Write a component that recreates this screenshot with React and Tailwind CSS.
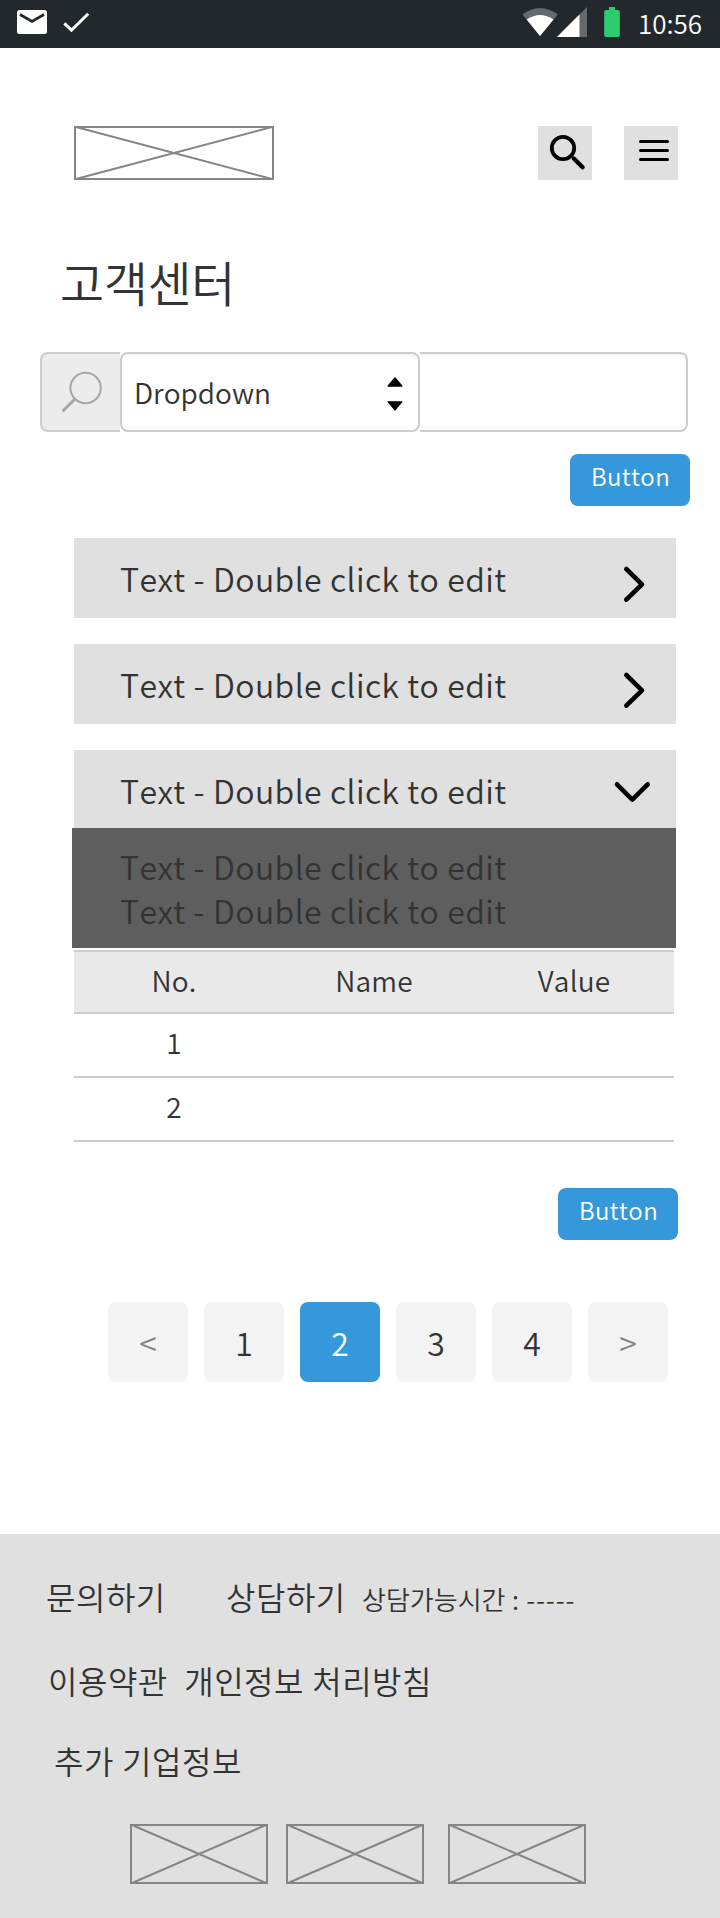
import React from "react";

function Placeholder({ width, height }) {
  return (
    <svg width={width} height={height} viewBox={`0 0 ${width} ${height}`} fill="none" stroke="#858585" className="block shrink-0">
      <rect x="1" y="1" width={width - 2} height={height - 2} strokeWidth="2" />
      <path d={`M2 1 L${width - 2} ${height - 1} M${width - 2} 1 L2 ${height - 1}`} strokeWidth="2" />
    </svg>
  );
}

function StatusBar() {
  return (
    <header className="flex h-12 items-start bg-[#23282c] text-white">
      <svg width="100" height="48" viewBox="0 0 100 48" fill="none" className="block">
        <rect x="17" y="10" width="30" height="24" rx="2.5" fill="#fff" />
        <path d="M20 14.5 L32 21.5 L44 14.5" stroke="#23282c" strokeWidth="2.8" />
        <path d="M64.3 23.3 L71.5 30.2 L88.2 13.7" stroke="#fff" strokeWidth="3" />
      </svg>
      <svg width="120" height="48" viewBox="510 0 120 48" className="ml-[410px] block">
        <path d="M522.5 14.5 Q540 1.5 557.8 14.5 L540 36 Z" fill="#66696c" />
        <path d="M526.7 19.5 Q540 10.5 553.5 19.5 L540 36 Z" fill="#fff" />
        <path d="M557 37 L587 7 V37 Z" fill="#66696c" />
        <path d="M557 37 L579.5 14.5 V37 Z" fill="#fff" />
        <path d="M609 7 h6 v3 h3 a1.8 1.8 0 0 1 1.8 1.8 v23.4 a1.8 1.8 0 0 1 -1.8 1.8 h-12 a1.8 1.8 0 0 1 -1.8 -1.8 v-23.4 a1.8 1.8 0 0 1 1.8 -1.8 h3 z" fill="#2ecc71" />
      </svg>
      <span className="ml-2 h-12 text-[26px] leading-[46px]">10:56</span>
    </header>
  );
}

function AccordionRow({ open }) {
  return (
    <div className={`flex items-center justify-between bg-[#e0e0e0] pl-[46px] ${open ? "h-[78px]" : "h-20"}`}>
      <span className={`text-[32px] leading-[44px] tracking-[0.4px] [word-spacing:0.5px] ${open ? "pt-0.5" : ""}`}>Text - Double click to edit</span>
      <svg width="64" height="78" viewBox="612 0 64 78" fill="none" stroke="#000" strokeWidth="4.6" strokeLinecap="round" strokeLinejoin="round">
        {open ? <path d="M617 34.3 L632.3 49.6 L647.7 34.3" /> : <path d="M626.3 30 L642 45.3 L626.3 60.6" />}
      </svg>
    </div>
  );
}

function Button() {
  return (
    <button className="flex h-[52px] w-[120px] items-center justify-center rounded-lg bg-[#3498db] pb-[9px] pl-[1px] text-2xl leading-none tracking-[0.4px] text-white [font-kerning:none]">
      Button
    </button>
  );
}

const pages = ["<", "1", "2", "3", "4", ">"];

function pageStyle(label) {
  if (label === "2") return "bg-[#3498db] text-white";
  if (label === "<" || label === ">") return "bg-[#f3f3f3] text-[#858585]";
  return "bg-[#f3f3f3] text-[#333333]";
}

export default function App() {
  return (
    <div className="h-[1918px] w-[720px] overflow-hidden bg-white font-['Noto_Sans_CJK_KR',sans-serif] font-[350] text-[#333333] [font-kerning:none]">
      <StatusBar />
      <div className="flex pl-[74px] pt-[78px]">
        <Placeholder width={200} height={54} />
        <div className="ml-[264px] h-[54px] w-[54px] bg-[#e0e0e0]">
          <svg width="54" height="54" viewBox="0 0 54 54" fill="none" stroke="#000">
            <circle cx="25" cy="22" r="11.2" strokeWidth="3.8" />
            <path d="M35.8 32.5 L44.6 41.3" strokeWidth="4.4" strokeLinecap="round" />
          </svg>
        </div>
        <div className="ml-8 h-[54px] w-[54px] bg-[#e0e0e0]">
          <svg width="54" height="54" viewBox="0 0 54 54" stroke="#000" strokeWidth="3" strokeLinecap="round">
            <path d="M16.5 15.5 H43.5 M16.5 24.5 H43.5 M16.5 33.5 H43.5" />
          </svg>
        </div>
      </div>

      <h1 className="ml-[60px] mt-[77px] h-12 text-5xl font-[350] leading-[48px] tracking-[-0.4px]">고객센터</h1>

      <div className="ml-10 mt-[47px] flex h-20">
        <div className="w-20 rounded-l-lg border-2 border-r-0 border-[#cccccc] bg-[#ececec]">
          <svg width="78" height="76" viewBox="42 34 78 76" fill="none" stroke="#a6a6a6">
            <circle cx="85.6" cy="68" r="15.2" strokeWidth="2" />
            <path d="M74.7 79.3 L63.5 90.4" strokeWidth="3" strokeLinecap="round" />
          </svg>
        </div>
        <div className="flex w-[300px] items-center justify-between rounded-lg border-2 border-[#cccccc] pl-3 shadow-[inset_0_2px_2px_rgba(0,0,0,0.04)]">
          <span className="text-[28px]">Dropdown</span>
          <svg width="32" height="76" viewBox="386 34 32 76" fill="#000" stroke="#000" strokeLinejoin="round">
            <path d="M395 58 L388.2 66 H401.8 Z M388.2 81.9 H401.8 L395 89.9 Z" strokeWidth="1.4" />
          </svg>
        </div>
        <div className="w-[268px] rounded-r-lg border-2 border-l-0 border-[#cccccc] shadow-[inset_0_2px_2px_rgba(0,0,0,0.04)]" />
      </div>

      <div className="ml-[570px] mt-[22px]"><Button /></div>

      <div className="ml-[74px] mt-8 flex w-[602px] flex-col gap-[26px]">
        <AccordionRow />
        <AccordionRow />
        <AccordionRow open />
      </div>
      <div className="ml-[72px] h-[120px] w-[604px] bg-[#5e5e5e] pl-12 pt-4 text-[32px] leading-[44px] tracking-[0.4px] [word-spacing:0.5px]">
        <p>Text - Double click to edit</p>
        <p>Text - Double click to edit</p>
      </div>

      <div className="ml-[74px] mt-0.5 w-[600px] text-center text-[28px] leading-[56px]">
        <div className="grid h-16 grid-cols-3 border-y-2 border-[#cccccc] bg-[#e9e9e9] tracking-[0.2px]">
          <span>No.</span>
          <span>Name</span>
          <span>Value</span>
        </div>
        <div className="grid h-16 grid-cols-3 border-b-2 border-[#cccccc]"><span>1</span></div>
        <div className="grid h-16 grid-cols-3 border-b-2 border-[#cccccc]"><span>2</span></div>
      </div>

      <div className="ml-[558px] mt-[46px]"><Button /></div>

      <nav className="ml-[108px] mt-[62px] flex gap-4">
        {pages.map((label) => (
          <button key={label} className={`flex h-20 w-20 items-center justify-center rounded-lg text-[32px] leading-none ${pageStyle(label)}`}>
            {label}
          </button>
        ))}
      </nav>

      <footer className="mt-[152px] h-[384px] bg-[#e0e0e0] pt-10 text-[32px] leading-[44px] tracking-[0.5px] [word-spacing:0.6px]">
        <div className="flex h-11 items-baseline pl-[46px]">
          <span className="w-[180px]">문의하기</span>
          <span className="w-[136px]">상담하기</span>
          <span className="text-[26px] tracking-normal">상담가능시간 :<span className="tracking-[0.9px]"> -----</span></span>
        </div>
        <p className="mt-10 whitespace-pre pl-12">이용약관  개인정보 처리방침</p>
        <p className="mt-9 pl-[54px]">추가 기업정보</p>
        <div className="mt-[42px] flex pl-[130px]">
          <Placeholder width={138} height={60} />
          <div className="ml-[18px]"><Placeholder width={138} height={60} /></div>
          <div className="ml-6"><Placeholder width={138} height={60} /></div>
        </div>
      </footer>
    </div>
  );
}
